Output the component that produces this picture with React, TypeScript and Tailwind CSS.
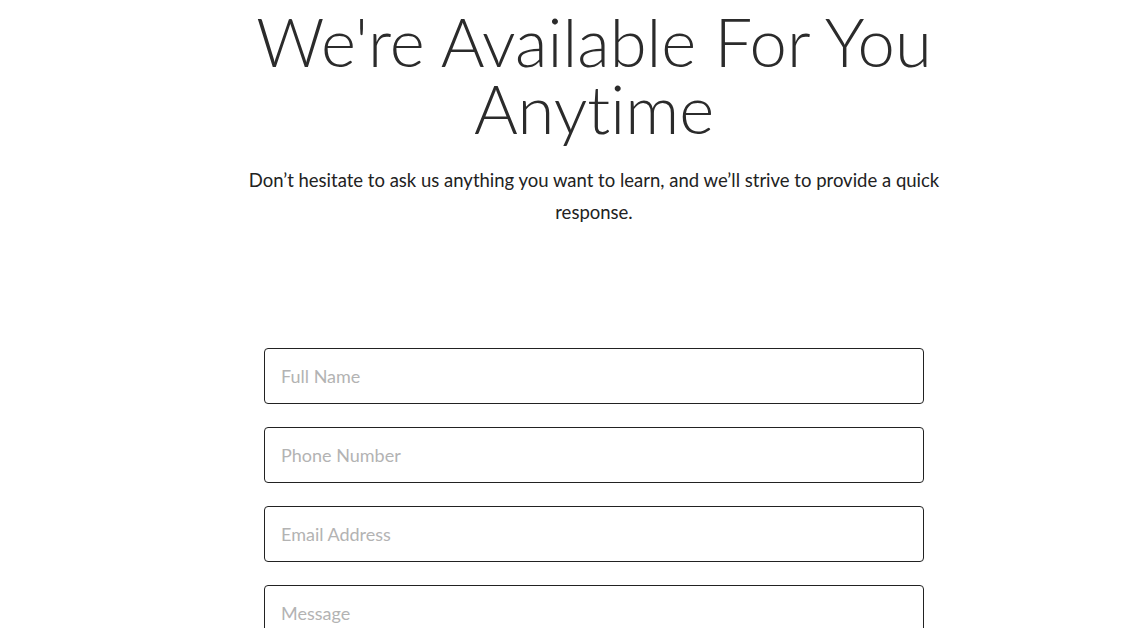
export default function App() {
  const fields = ["Full Name", "Phone Number", "Email Address"];
  return (
    <div className="min-h-screen bg-white font-['Lato','Noto_Sans',sans-serif] text-[#333] [font-variant-ligatures:none]">
      <div className="flex flex-col items-center pl-[46px]">
        <h1 className="mt-[8px] w-[720px] text-center text-[67px] font-light leading-[67px] text-[#2b2b2b]">
          We're Available For You Anytime
        </h1>
        <p className="mt-[22px] w-[720px] text-center text-[18.5px] leading-[32px] text-[#222]">
          Don’t hesitate to ask us anything you want to learn, and we’ll strive to provide a quick response.
        </p>
        <form className="mt-[120px] flex w-[660px] flex-col gap-[23px]">
          {fields.map((f) => (
            <input
              key={f}
              placeholder={f}
              className="h-[56px] w-full rounded-[4px] border border-[#222] px-4 text-[18px] text-[#333] outline-none placeholder:text-[#b3b3b3]"
            />
          ))}
          <textarea
            placeholder="Message"
            className="h-[140px] w-full resize-none rounded-[4px] border border-[#222] px-4 pt-[14px] text-[18px] text-[#333] outline-none placeholder:text-[#b3b3b3]"
          />
        </form>
      </div>
    </div>
  );
}
